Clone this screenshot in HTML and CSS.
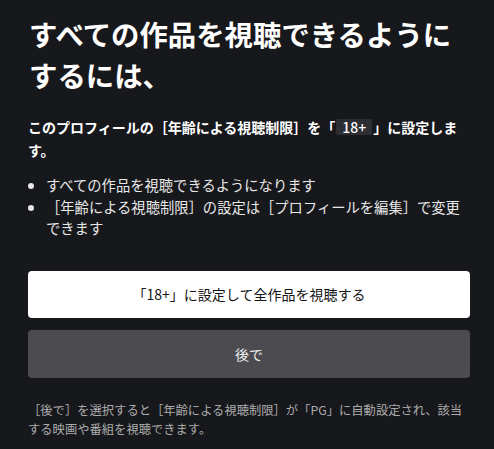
FILE: index.html
```html
<!DOCTYPE html>
<html lang="ja">
<head>
<meta charset="utf-8">
<link rel="stylesheet" href="styles.css">
</head>
<body>
<main class="dialog">
  <h1 class="title">すべての作品を視聴できるようにするには、</h1>
  <p class="lead">このプロフィールの［年齢による視聴制限］を「<span class="badge">18+</span>」に設定します。</p>
  <ul class="points">
    <li>すべての作品を視聴できるようになります</li>
    <li>［年齢による視聴制限］の設定は［プロフィールを編集］で変更できます</li>
  </ul>
  <div class="actions">
    <button class="btn btn-primary">「18+」に設定して全作品を視聴する</button>
    <button class="btn btn-secondary">後で</button>
  </div>
  <p class="note">［後で］を選択すると［年齢による視聴制限］が「PG」に自動設定され、該当する映画や番組を視聴できます。</p>
</main>
</body>
</html>
```
FILE: styles.css
```css
html, body {
  margin: 0;
  padding: 0;
  background: #17181c;
}
body {
  font-family: "Noto Sans CJK JP", "Noto Sans", sans-serif;
  color: #ffffff;
  text-spacing-trim: space-all;
}
.dialog {
  padding: 13px 24px 0 28px;
  display: flex;
  flex-direction: column;
}
.title {
  margin: 0;
  font-size: 28.4px;
  line-height: 41px;
  font-weight: 700;
  padding-left: 1px;
}
.lead {
  margin: 21px 0 0 0;
  font-size: 14px;
  line-height: 23px;
  font-weight: 700;
}
.badge {
  display: inline-block;
  background: #2c2e33;
  border-radius: 2px;
  padding: 0 6px;
  line-height: 16px;
  font-weight: 500;
  margin: 0 1px;
}
.points {
  margin: 12px 0 0 0;
  padding: 0 0 0 18px;
  font-size: 14.3px;
  line-height: 21.5px;
  color: #e8e8e8;
}
.actions {
  margin-top: 32px;
  display: flex;
  flex-direction: column;
  gap: 12px;
}
.btn {
  font-family: inherit;
  font-size: 14px;
  height: 47px;
  border: none;
  border-radius: 4px;
  width: 100%;
}
.btn-primary {
  background: #ffffff;
  color: #141414;
}
.btn-secondary {
  background: #4b4b50;
  color: #f0f0f0;
  height: 48px;
}
.note {
  margin: 23px 0 0 0;
  font-size: 12.3px;
  line-height: 19px;
  color: #acacac;
}
```
